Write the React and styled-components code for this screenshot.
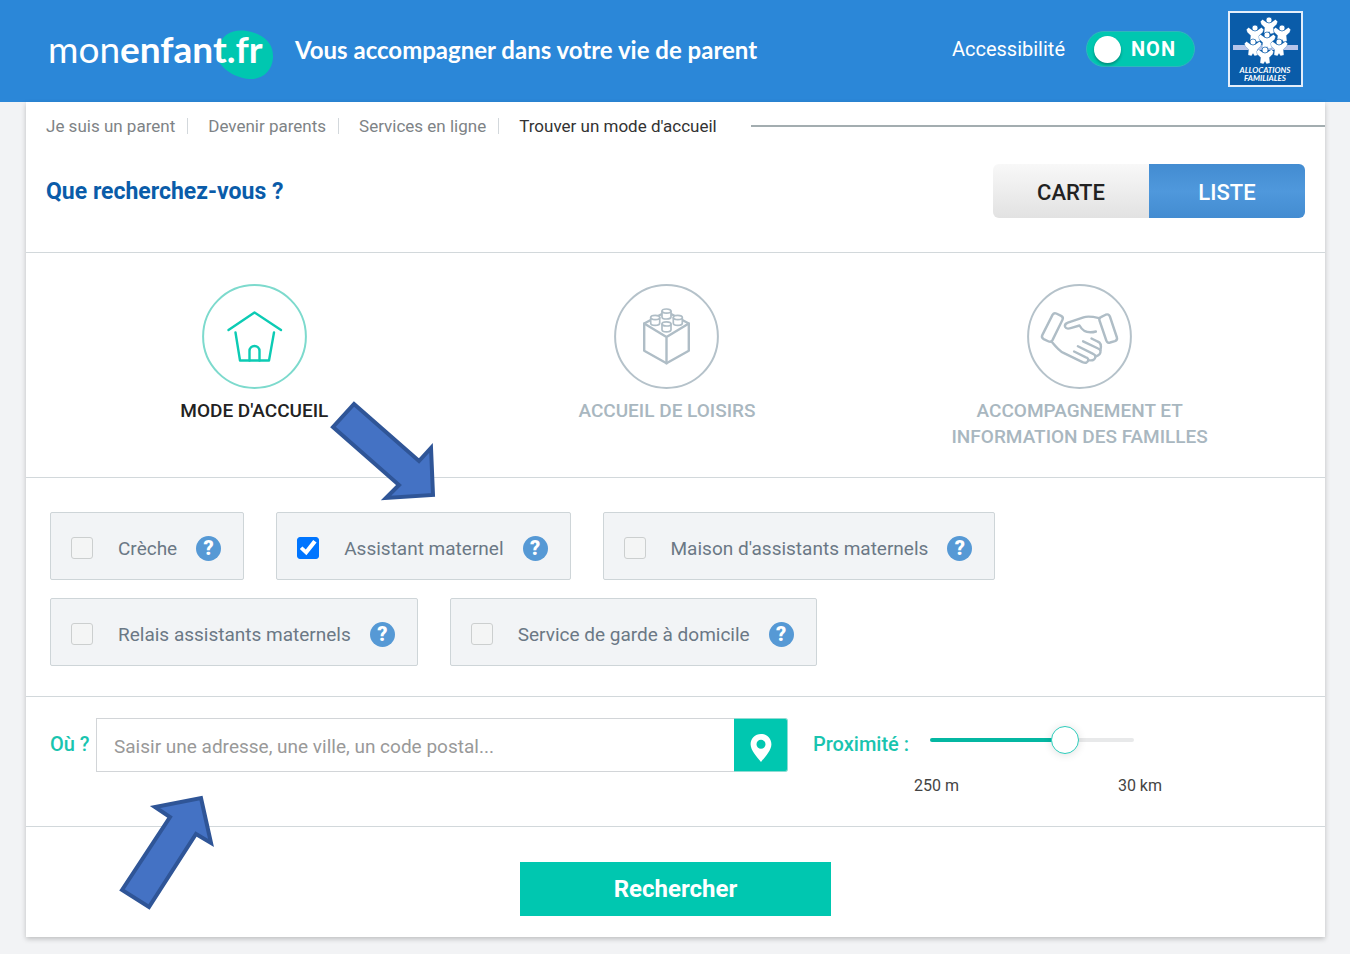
import React, { useState } from 'react'
import styled, { createGlobalStyle } from 'styled-components';

const TYPES = [
  { id: "mode", label: "MODE D'ACCUEIL", icon: "house" },
  { id: "loisirs", label: "ACCUEIL DE LOISIRS", icon: "brick" },
  { id: "familles", label: "ACCOMPAGNEMENT ET INFORMATION DES FAMILLES", icon: "hands" },
];

const MODES = [
  "Crèche",
  "Assistant maternel",
  "Maison d'assistants maternels",
  "Relais assistants maternels",
  "Service de garde à domicile",
];

const FIGURES = [[41, 9], [27, 17], [54, 17], [39, 24], [25, 31], [51, 31], [37, 39]];

const CafLogo = () => (
  <svg width="75" height="76" viewBox="0 0 75 76" role="img" aria-label="Allocations familiales">
    <rect x="1" y="1" width="73" height="74" fill="#0a5ca9" stroke="#e4eefa" strokeWidth="2" />
    <rect x="5" y="34" width="65" height="5" fill="#b5c4ea" />
    {FIGURES.map(([x, y]) => (
      <g key={`${x}-${y}`} transform={`translate(${x} ${y})`} fill="#fff">
        <path
          d="M-8.6 1.4 L-6.4 -0.6 L-2.6 2.2 H2.6 L6.4 -0.6 L8.6 1.4 L7.8 4.2 L4.4 7.4 L5 13 L1.6 14 L0 11.6 L-1.6 14 L-5 13 L-4.4 7.4 L-7.8 4.2 Z"
          stroke="#0a5ca9"
          strokeWidth="0.3"
        />
        <circle r="3" stroke="#0a5ca9" strokeWidth="0.7" />
      </g>
    ))}
    <CafText x="37" y="62">ALLOCATIONS</CafText>
    <CafText x="37" y="70">FAMILIALES</CafText>
  </svg>
)

const HouseIcon = () => (
  <g>
    <path d="M-26 -6.5 L0 -24 L26.5 -6.5" />
    <path d="M-19 -4 L-14.5 24 H14.5 L19.5 -4" />
    <path d="M-5 24 V14.5 A5 5 0 0 1 5 14.5 V24" />
  </g>
)

const Stud = ({ x, y }) => (
  <g transform={`translate(${x} ${y})`} fill="#fff" strokeWidth="1.7">
    <path d="M-4.5 -2.6 V3 A4.5 2.1 0 0 0 4.5 3 V-2.6" />
    <ellipse cy="-2.8" rx="4.5" ry="2.1" />
  </g>
)

const BrickIcon = () => (
  <g>
    <path d="M-22.3 -13 L0 -25 L22.3 -13 V14.3 L0 26.7 L-22.3 14.3 Z" />
    <path d="M-22.3 -13 L0 0.5 L22.3 -13 M0 0.5 V26.7" />
    <Stud x={0} y={-22.6} />
    <Stud x={-11.3} y={-16.2} />
    <Stud x={11.3} y={-16.2} />
    <Stud x={0} y={-9.8} />
  </g>
)

const HandsIcon = () => (
  <g>
    <path d="M-27 -21.6 Q-25.6 -24 -23.2 -23 L-18.4 -20.6 Q-15.8 -19.2 -17 -16.8 L-27 3.6 Q-28.4 6 -30.8 5 L-35.8 2.6 Q-38.4 1.2 -37.2 -1.4 Z" />
    <path d="M21.4 -19.4 L26.2 -21.8 Q29.2 -23 30.4 -20 L37.4 1 Q38.2 3.6 35.4 4.6 L30.6 6 Q27.6 6.8 26.8 4 L20 -16 Q19.2 -18.4 21.4 -19.4 Z" />
    <path d="M19.6 -18.4 Q9 -20.8 4 -19.2 L-11.6 -13.8 Q-15.4 -12.4 -14.4 -9.6 Q-13.2 -6.8 -8 -8.6 L0 -11 Q5 -1.8 16.4 -5" />
    <path d="M-27.6 5.4 Q-20 14.6 -16 16.4 L3 25.6 Q8 27.6 8.8 23.6 Q8.8 21.4 6.4 20.8 L-5.4 15" />
    <path d="M8.8 23.6 Q15.6 25 16 20 Q15.8 18.2 13.6 17.4 L-1.6 9.8" />
    <path d="M16 20 Q21.4 18.6 21 14.4 Q20.6 12.8 18.6 12 L3.6 4.8" />
    <path d="M21 13.6 Q22.6 6.4 18 5 L12 2" />
  </g>
)

const ICONS = { house: HouseIcon, brick: BrickIcon, hands: HandsIcon };

const App = () => {

  const [accessible, setAccessible] = useState(false);
  const [view, setView] = useState("LISTE");
  const [type, setType] = useState("mode");
  const [checked, setChecked] = useState(["Assistant maternel"]);
  const [address, setAddress] = useState("");
  const [distance, setDistance] = useState(69);

  const toggleMode = (mode) => {
    setChecked(checked.includes(mode) ? checked.filter((m) => m !== mode) : [...checked, mode]);
  }

  return (
    <>
      <GlobalStyle />
      <Header>
        <Logo href="#">
          <Blob width="58" height="52" viewBox="0 0 58 52" aria-hidden="true">
            <path d="M2 19 C6 4 18 0 31 2 C46 5 58 13 57 29 C56 43 45 51 33 50 C22 49 13 44 7 38 C1 32 0 26 2 19 Z" fill="#00c7b0" />
          </Blob>
          <span>mon<b>enfant.fr</b></span>
        </Logo>
        <Tagline>Vous accompagner dans votre vie de parent</Tagline>
        <AccessLabel id="access">Accessibilité</AccessLabel>
        <Toggle
          type="button"
          role="switch"
          aria-checked={accessible}
          aria-labelledby="access"
          onClick={() => setAccessible(!accessible)}
        >
          <Knob />
          {accessible ? "OUI" : "NON"}
        </Toggle>
        <CafLogo />
      </Header>

      <Card>
        <Breadcrumb aria-label="Fil d'Ariane">
          <Crumb href="#">Je suis un parent</Crumb>
          <Crumb href="#">Devenir parents</Crumb>
          <Crumb href="#">Services en ligne</Crumb>
          <Current aria-current="page">Trouver un mode d'accueil</Current>
          <CrumbLine />
        </Breadcrumb>

        <TitleRow>
          <Title>Que recherchez-vous ?</Title>
          <Views>
            {["CARTE", "LISTE"].map((name) => (
              <ViewButton
                key={name}
                type="button"
                $active={view === name}
                aria-pressed={view === name}
                onClick={() => setView(name)}
              >
                {name}
              </ViewButton>
            ))}
          </Views>
        </TitleRow>

        <Types>
          {TYPES.map(({ id, label, icon }) => {
            const Icon = ICONS[icon];
            return (
              <TypeButton
                key={id}
                type="button"
                $active={type === id}
                aria-pressed={type === id}
                onClick={() => setType(id)}
              >
                <TypeIcon $active={type === id} viewBox="-52.5 -52.5 105 105" aria-hidden="true">
                  <circle r="51.4" />
                  <Icon />
                </TypeIcon>
                <TypeLabel>{label}</TypeLabel>
              </TypeButton>
            )
          })}
          <TypeArrow viewBox="0 0 106 100" aria-hidden="true">
            <path d="M24 3 L89 60 L101 47 L103 94 L56 97 L69 84 L3 26 Z" />
          </TypeArrow>
        </Types>

        <Modes>
          {MODES.map((mode) => (
            <Mode key={mode}>
              <ModeLabel>
                <Check
                  type="checkbox"
                  checked={checked.includes(mode)}
                  onChange={() => toggleMode(mode)}
                />
                {mode}
              </ModeLabel>
              <Help type="button" aria-label={`Aide : ${mode}`}>?</Help>
            </Mode>
          ))}
        </Modes>

        <Where>
          <WhereLabel htmlFor="address">Où ?</WhereLabel>
          <AddressGroup>
            <Address
              id="address"
              type="text"
              value={address}
              onChange={(e) => setAddress(e.target.value)}
              placeholder="Saisir une adresse, une ville, un code postal..."
            />
            <Locate type="button" aria-label="Me localiser">
              <svg width="22" height="28" viewBox="0 0 22 28">
                <path fill="#fff" fillRule="evenodd" d="M11 0 C17 0 21.4 4.6 21.4 10.2 C21.4 16.4 15 23 11 28 C7 23 0.6 16.4 0.6 10.2 C0.6 4.6 5 0 11 0 Z M11 5.8 A4.5 4.5 0 1 0 11 14.8 A4.5 4.5 0 1 0 11 5.8 Z" />
              </svg>
            </Locate>
          </AddressGroup>
          <NearLabel htmlFor="distance">Proximité :</NearLabel>
          <Near>
            <Slider
              id="distance"
              type="range"
              min="0"
              max="100"
              value={distance}
              onChange={(e) => setDistance(Number(e.target.value))}
              style={{ "--filled": `${distance}%` }}
            />
            <Bounds>
              <span>250 m</span>
              <span>30 km</span>
            </Bounds>
          </Near>
          <WhereArrow viewBox="0 0 96 116" aria-hidden="true">
            <path d="M4 95 L52 22 L37 12 L83 3 L93 48 L78 39 L31 112 Z" />
          </WhereArrow>
        </Where>

        <Actions>
          <Submit type="submit">Rechercher</Submit>
        </Actions>
      </Card>
    </>
  )
}

export default App

const GlobalStyle = createGlobalStyle`
  * {
    box-sizing: border-box;
  }

  body {
    margin: 0;
    background: #f2f3f5;
    font-family: Roboto, "Liberation Sans", sans-serif;
    color: #222;
  }

  button, input {
    font-family: inherit;
  }
`;

const Header = styled.header`
  display: flex;
  align-items: center;
  height: 102px;
  padding: 0 47px 4px 48px;
  background: #2b87d8;
  color: #fff;
`;

const Logo = styled.a`
  position: relative;
  width: 226px;
  color: #fff;
  font-family: Lato, sans-serif;
  font-size: 37px;
  line-height: 48px;
  text-decoration: none;

  span {
    position: relative;
  }
`;

const Blob = styled.svg`
  position: absolute;
  right: 0;
  top: 4px;
`;

const Tagline = styled.p`
  flex: 1;
  margin: 0;
  padding-left: 21px;
  font-family: Lato, sans-serif;
  font-size: 24px;
  font-weight: 700;
`;

const AccessLabel = styled.span`
  font-size: 20px;
`;

const Toggle = styled.button`
  display: flex;
  align-items: center;
  gap: 10px;
  width: 109px;
  height: 36px;
  margin: 0 33px 0 21px;
  padding: 0 7px;
  border: 1px solid #30b5bd;
  border-radius: 18px;
  background: #00c7b0;
  color: #fff;
  font-size: 20px;
  font-weight: 700;
  letter-spacing: 1px;
`;

const Knob = styled.span`
  width: 27px;
  height: 27px;
  border-radius: 50%;
  background: #fff;
  box-shadow: 0 2px 3px rgba(0, 0, 0, 0.3);
`;

const Card = styled.main`
  margin: 0 25px 17px 26px;
  background: #fff;
  box-shadow: 0 2px 5px rgba(0, 0, 0, 0.22);
`;

const Breadcrumb = styled.nav`
  display: flex;
  align-items: center;
  height: 48px;
  padding-left: 20px;
  font-size: 17px;
  line-height: 16px;
`;

const Crumb = styled.a`
  margin-right: 20px;
  padding-right: 12px;
  border-right: 1px solid #d3d8dc;
  color: #7e8386;
  text-decoration: none;
`;

const Current = styled.span`
  color: #333;
`;

const CrumbLine = styled.span`
  flex: 1;
  height: 2px;
  margin-left: 34px;
  background: #a3adb0;
`;

const TitleRow = styled.div`
  display: flex;
  align-items: center;
  justify-content: space-between;
  padding: 14px 20px 34px 20px;
  border-bottom: 1px solid #d2d8db;
`;

const Title = styled.h1`
  margin: 0;
  color: #0a5ca9;
  font-size: 23px;
  font-weight: 700;
`;

const Views = styled.div`
  display: flex;
  border-radius: 6px;
  overflow: hidden;
`;

const ViewButton = styled.button`
  width: 156px;
  height: 54px;
  padding-top: 3px;
  border: 0;
  background: ${props => props.$active
    ? "linear-gradient(#438cd1, #4f98dc 50%, #438cd1)"
    : "linear-gradient(#f8f8f8, #e2e2e2)"};
  color: ${props => props.$active ? "#fff" : "#222"};
  font-size: 22px;
  font-weight: 500;
`;

const Types = styled.div`
  position: relative;
  display: grid;
  grid-template-columns: repeat(3, 1fr);
  align-items: start;
  padding: 31px 39px 27px 22px;
  border-bottom: 1px solid #d2d8db;
`;

const TypeButton = styled.button`
  display: flex;
  flex-direction: column;
  align-items: center;
  gap: 9px;
  padding: 0;
  border: 0;
  background: none;
  color: ${props => props.$active ? "#222" : "#a9b7c0"};
  font-size: 19px;
  font-weight: 500;
  line-height: 26px;
`;

const TypeIcon = styled.svg`
  width: 105px;
  height: 105px;
  fill: none;
  stroke: ${props => props.$active ? "#0ccbb4" : "#afbdc6"};
  stroke-width: 2.4;
  stroke-linejoin: round;
  stroke-linecap: round;

  > circle {
    stroke: ${props => props.$active ? "#7ddacd" : "#b5c2ca"};
    stroke-width: 2;
  }
`;

const TypeLabel = styled.span`
  max-width: 270px;
`;

const Arrow = styled.svg`
  position: absolute;
  z-index: 1;
  fill: #4472c4;
  stroke: #2f5597;
  stroke-width: 4;
  pointer-events: none;
`;

const TypeArrow = styled(Arrow)`
  top: 148px;
  left: 304px;
  width: 106px;
`;

const WhereArrow = styled(Arrow)`
  top: 98px;
  left: 92px;
  width: 96px;
`;

const Modes = styled.div`
  display: flex;
  flex-wrap: wrap;
  gap: 18px 32px;
  padding: 34px 24px 30px;
  border-bottom: 1px solid #d2d8db;
`;

const Mode = styled.div`
  display: flex;
  align-items: center;
  gap: 19px;
  height: 68px;
  padding: 4px 22px 0 20px;
  border: 1px solid #ced5d8;
  border-radius: 2px;
  background: #f2f4f6;
`;

const ModeLabel = styled.label`
  display: flex;
  align-items: center;
  gap: 25px;
  color: #6b7885;
  font-size: 19px;
`;

const Check = styled.input`
  appearance: none;
  width: 22px;
  height: 22px;
  margin: 0;
  border: 1px solid #cccfcf;
  border-radius: 3px;
  background: #f4f5f5;

  &:checked {
    border-color: #0075ff;
    background: #0075ff;
  }

  &:checked::before {
    content: "";
    display: block;
    width: 20px;
    height: 20px;
    background: #fff;
    clip-path: polygon(8% 55%, 21% 42%, 38% 58%, 75% 10%, 92% 22%, 41% 86%);
  }
`;

const Help = styled.button`
  width: 25px;
  height: 25px;
  padding: 0;
  border: 0;
  border-radius: 50%;
  background: #5699d5;
  color: #fff;
  font-size: 20px;
  font-weight: 900;
  line-height: 25px;
`;

const Where = styled.div`
  position: relative;
  display: flex;
  align-items: flex-start;
  padding: 21px 163px 30px 24px;
  border-bottom: 1px solid #d2d8db;
`;

const WhereLabel = styled.label`
  width: 46px;
  color: #19c4af;
  font-size: 20px;
  font-weight: 500;
  line-height: 52px;
`;

const NearLabel = styled(WhereLabel)`
  width: 101px;
  margin-left: 25px;
  white-space: nowrap;
`;

const AddressGroup = styled.div`
  display: flex;
  flex: 1;
`;

const Address = styled.input`
  flex: 1;
  min-width: 0;
  height: 54px;
  padding: 2px 17px 0;
  border: 1px solid #d2d5d8;
  border-right: 0;
  color: #444;
  font-size: 19px;

  &::placeholder {
    color: #999;
  }
`;

const Locate = styled.button`
  display: flex;
  align-items: center;
  justify-content: center;
  width: 54px;
  height: 54px;
  padding: 5px 0 0;
  border: 1px solid #8edbd2;
  border-left: 0;
  border-radius: 0 3px 3px 0;
  background: #00c7b0;
`;

const Near = styled.div`
  width: 248px;
  padding-top: 8px;
`;

const Slider = styled.input`
  appearance: none;
  display: block;
  width: 204px;
  height: 28px;
  margin: 0 0 0 16px;
  background: none;

  &::-webkit-slider-runnable-track {
    height: 4px;
    border-radius: 2px;
    background: linear-gradient(to right, #04b7a2 var(--filled), #e8e9ea var(--filled));
  }

  &::-webkit-slider-thumb {
    appearance: none;
    width: 28px;
    height: 28px;
    margin-top: -12px;
    border: 1px solid #2dcdbb;
    border-radius: 50%;
    background: #fff;
    box-shadow: 0 1px 8px rgba(0, 0, 0, 0.12);
  }
`;

const Bounds = styled.div`
  display: flex;
  justify-content: space-between;
  margin-top: 22px;
  color: #444;
  font-size: 16px;
  line-height: 20px;
`;

const Actions = styled.div`
  display: flex;
  justify-content: center;
  padding: 35px 24px 21px;
`;

const Submit = styled.button`
  width: 311px;
  height: 54px;
  border: 0;
  background: #00c7b0;
  color: #fff;
  font-size: 24px;
  font-weight: 700;
`;

const CafText = styled.text`
  fill: #fff;
  font-family: Lato, sans-serif;
  font-size: 8px;
  font-style: italic;
  font-weight: 700;
  text-anchor: middle;
`;
